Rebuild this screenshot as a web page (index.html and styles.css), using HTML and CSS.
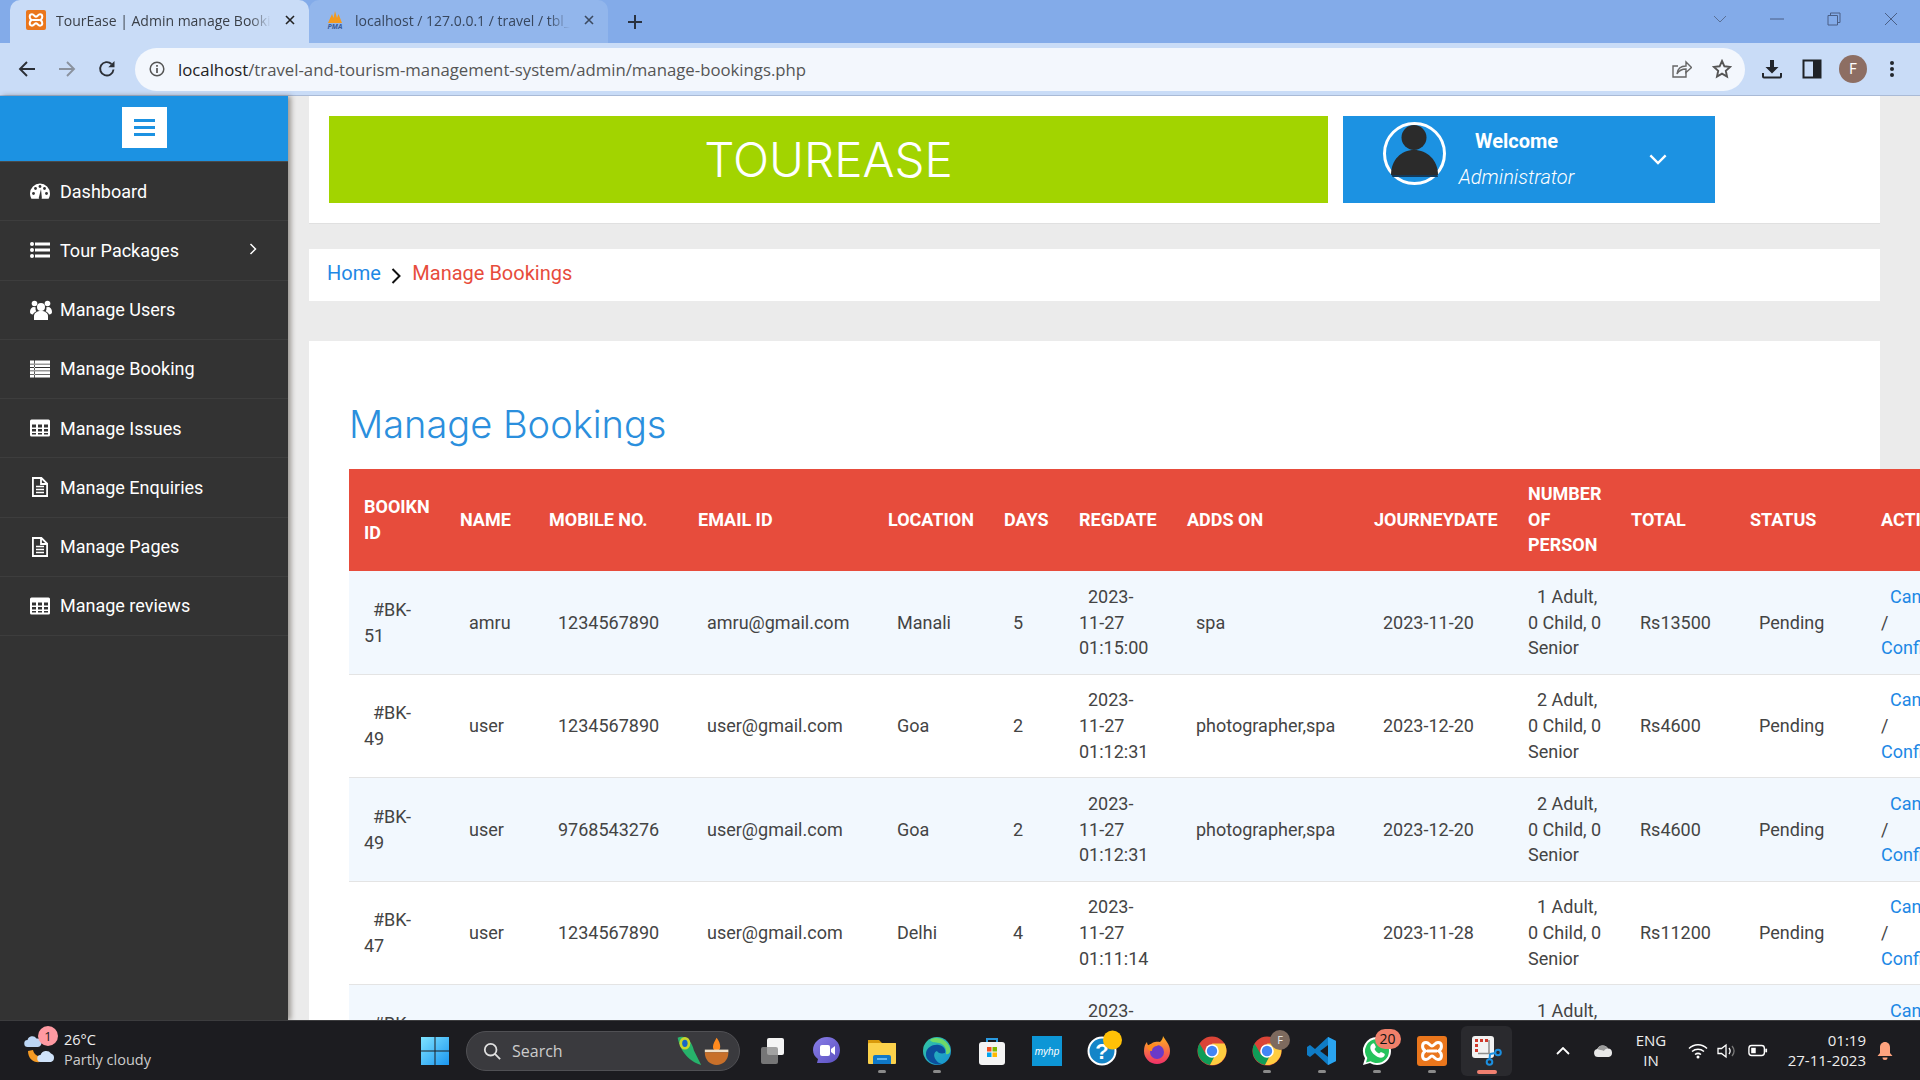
FILE: index.html
```html
<!DOCTYPE html>
<html lang="en">
<head>
  <meta charset="UTF-8">
  <meta name="viewport" content="width=device-width, initial-scale=1.0">
  <title>TourEase | Admin manage Bookings</title>
  <link rel="stylesheet" href="styles.css">
</head>
<body>
  <svg class="icon-defs">
    <symbol id="i-table" viewBox="0 0 20 17"><path fill="#fff" fill-rule="evenodd" d="M1.5 0h17A1.5 1.5 0 0 1 20 1.500v14a1.500 1.500 0 0 1-1.500 1.500h-17A1.500 1.500 0 0 1 0 15.500v-14A1.500 1.500 0 0 1 1.500 0zM2 5v3h4V5zm6 0v3h4V5zm6 0v3h4V5zM2 9.500v2.500h4V9.500zm6 0v2.500h4V9.500zm6 0v2.500h4V9.500zM2 13.500V15h4v-1.500zm6 0V15h4v-1.500zm6 0V15h4v-1.500z"/></symbol>
    <symbol id="i-file" viewBox="0 0 18 20"><path fill="none" stroke="#fff" stroke-width="1.800" d="M1.900 1h8.500l5.700 5.700V19H1.900zM10 1v6h6"/><path stroke="#fff" stroke-width="1.400" d="M5 9.500h8M5 12.500h8M5 15.500h8"/></symbol>
    <symbol id="i-xampp" viewBox="0 0 30 30"><rect width="30" height="30" rx="3" fill="#ea761c"/><path fill="none" stroke="#fff" stroke-width="3" d="M9 6.500c3 0 4 3.500 6 3.500s3-3.500 6-3.500c4.500 0 4.500 6.500.5 8.500 4 2 4 8.500-.5 8.500-3 0-4-3.500-6-3.500s-3 3.500-6 3.500c-4.500 0-4.500-6.500-.5-8.500-4-2-4-8.500.5-8.500zM10 15h10"/></symbol>
    <symbol id="i-chrome" viewBox="0 0 30 30"><circle cx="15" cy="15" r="14.500" fill="#db4437"/><path fill="#0f9d58" d="M2.500 7.500a14.500 14.500 0 0 0 10.500 21.400l6-10.400H9z"/><path fill="#ffcd40" d="M29.500 15c0-2.700-.8-5.300-2-7.500H15l4.500 9-6.500 12.400A14.500 14.500 0 0 0 29.500 15z"/><circle cx="15" cy="15" r="6.800" fill="#fff"/><circle cx="15" cy="15" r="5.200" fill="#4285f4"/></symbol>
  </svg>

  <!-- browser window top -->
  <div class="tabstrip">
    <div class="tab tab-active">
      <svg class="favicon"><use href="#i-xampp"/></svg>
      <span class="tab-title">TourEase | Admin manage Bookings</span>
      <svg class="tab-close" viewBox="0 0 10 10"><path stroke="#222" stroke-width="1.600" d="M1 1l8 8M9 1l-8 8"/></svg>
    </div>
    <div class="tab">
      <svg class="favicon" viewBox="0 0 20 20"><path fill="#f39a1e" d="M3 13L7 4l1.500 4L10 1l2 7 1.500-4 3.500 9z"/><text x="10" y="19" font-size="7" font-style="italic" font-weight="700" fill="#3a5c9a" text-anchor="middle">PMA</text></svg>
      <span class="tab-title">localhost / 127.0.0.1 / travel / tbl_booking</span>
      <svg class="tab-close" viewBox="0 0 10 10"><path stroke="#3c4a60" stroke-width="1.600" d="M1 1l8 8M9 1l-8 8"/></svg>
    </div>
    <svg class="new-tab" viewBox="0 0 16 16"><path stroke="#2a3240" stroke-width="2" d="M8 1v14M1 8h14"/></svg>
    <div class="window-btns">
      <svg class="win-btn" viewBox="0 0 14 14"><path fill="none" stroke="#5a7096" stroke-width="1" d="M1 4l6 6 6-6"/></svg>
      <svg class="win-btn" viewBox="0 0 14 14"><path stroke="#4a5f86" stroke-width="1" d="M0 7h14"/></svg>
      <svg class="win-btn" viewBox="0 0 14 14"><path fill="none" stroke="#4a5f86" stroke-width="1" d="M1 3.500h9.500V13H1zM3.500 3.500V1H13v9.500h-2.500"/></svg>
      <svg class="win-btn" viewBox="0 0 14 14"><path stroke="#4a5f86" stroke-width="1" d="M1 1l12 12M13 1L1 13"/></svg>
    </div>
  </div>

  <div class="toolbar">
    <svg class="nav-btn" viewBox="0 0 18 18"><path fill="none" stroke="#2b2f36" stroke-width="1.900" d="M17 9H2M9 2L2 9l7 7"/></svg>
    <svg class="nav-btn" viewBox="0 0 18 18"><path fill="none" stroke="#8a929e" stroke-width="1.900" d="M1 9h15M9 2l7 7-7 7"/></svg>
    <svg class="nav-btn" viewBox="0 0 18 18"><path fill="none" stroke="#2b2f36" stroke-width="1.900" d="M15.500 9.500A6.700 6.700 0 1 1 13.500 4"/><path fill="#2b2f36" d="M16.500 1v6.200h-6.200z"/></svg>
    <div class="address">
      <svg class="info-icon" viewBox="0 0 16 16"><circle cx="8" cy="8" r="6.800" fill="none" stroke="#555" stroke-width="1.500"/><path stroke="#555" stroke-width="1.700" d="M8 7v5M8 4v1.800"/></svg>
      <span class="url"><b>localhost</b>/travel-and-tourism-management-system/admin/manage-bookings.php</span>
      <svg class="addr-icon" viewBox="0 0 20 20"><path fill="none" stroke="#666" stroke-width="1.400" d="M14 12v6H1V7h5"/><path fill="none" stroke="#666" stroke-width="1.400" d="M5 15c.5-5 4-8 9-8V3l5.500 5.500L14 13.500V10c-4 0-7 1.500-9 5z"/></svg>
      <svg class="addr-icon" viewBox="0 0 20 20"><path fill="none" stroke="#555" stroke-width="1.900" d="M10 2l2.400 5.300 5.700.6-4.300 3.900 1.200 5.700-5-2.900-5 2.900 1.200-5.700L1.900 7.900l5.700-.6z"/></svg>
    </div>
    <svg class="tool-btn tool-first" viewBox="0 0 20 20"><path fill="#22262c" d="M8 1h4v7h4.500L10 14.500 3.500 8H8z"/><path fill="none" stroke="#22262c" stroke-width="2" d="M1 14v3.500a1 1 0 0 0 1 1h16a1 1 0 0 0 1-1V14"/></svg>
    <svg class="tool-btn" viewBox="0 0 20 20"><rect x="1.500" y="1.500" width="17" height="17" fill="#c9dcf7" stroke="#1f2226" stroke-width="2"/><rect x="11" y="2" width="7" height="16" fill="#1f2226"/></svg>
    <div class="profile">F</div>
    <svg class="tool-btn" viewBox="0 0 20 20"><circle cx="10" cy="4" r="2" fill="#22262c"/><circle cx="10" cy="10" r="2" fill="#22262c"/><circle cx="10" cy="16" r="2" fill="#22262c"/></svg>
  </div>

  <div class="app">
    <aside class="sidebar">
      <div class="side-top">
        <div class="burger"><span></span><span></span><span></span></div>
      </div>
      <ul class="side-menu">
        <li>
          <svg class="side-icon" viewBox="0 0 20 17"><path fill="#fff" d="M10 1a10 10 0 0 1 10 10c0 2-.5 3.800-1.400 5.200H1.400A10 10 0 0 1 0 11 10 10 0 0 1 10 1z"/><g fill="#333"><circle cx="3.500" cy="11" r="1.400"/><circle cx="5.500" cy="6" r="1.400"/><circle cx="10" cy="4" r="1.400"/><circle cx="14.500" cy="6" r="1.400"/><circle cx="16.500" cy="11" r="1.400"/><path d="M9 14.500l2-8 .8 8.200a1.500 1.500 0 1 1-2.800-.2z"/></g></svg>
          Dashboard
        </li>
        <li>
          <svg class="side-icon" viewBox="0 0 20 17"><g fill="#fff"><circle cx="2" cy="2.500" r="2"/><circle cx="2" cy="8.500" r="2"/><circle cx="2" cy="14.500" r="2"/><rect x="5" y="1" width="15" height="3"/><rect x="5" y="7" width="15" height="3"/><rect x="5" y="13" width="15" height="3"/></g></svg>
          Tour Packages
          <svg class="side-arrow" viewBox="0 0 8 12"><path fill="none" stroke="#fff" stroke-width="1.500" d="M1.500 1l5 5-5 5"/></svg>
        </li>
        <li>
          <svg class="side-icon side-icon-users" viewBox="0 0 22 20"><g fill="#fff"><circle cx="11" cy="7" r="4"/><path d="M4 20v-4c0-3 3-5 7-5s7 2 7 5v4z"/><circle cx="4.500" cy="3.500" r="2.800"/><circle cx="17.500" cy="3.500" r="2.800"/><path d="M0 12c0-3 1.500-5 4-5 .6 0 1.300.2 1.800.5-.6 1.500-.2 2.800.6 3.700C4.500 12 3.500 13 3 14.500 1 14.500 0 13.500 0 12zM22 12c0-3-1.500-5-4-5-.6 0-1.300.2-1.800.5.600 1.500.2 2.800-.6 3.700 1.900.8 2.900 1.800 3.400 3.300 2 0 3-1 3-2.500z"/></g></svg>
          Manage Users
        </li>
        <li>
          <svg class="side-icon" viewBox="0 0 20 17"><path fill="#fff" fill-rule="evenodd" d="M0 0h20v17H0zM0 3.200h20v.8H0zM0 6.600h20v.8H0zM0 10h20v.8H0zM0 13.400h20v.8H0zM4 0h.8v17H4z"/></svg>
          Manage Booking
        </li>
        <li><svg class="side-icon"><use href="#i-table"/></svg>Manage Issues</li>
        <li><svg class="side-icon"><use href="#i-file"/></svg>Manage Enquiries</li>
        <li><svg class="side-icon"><use href="#i-file"/></svg>Manage Pages</li>
        <li><svg class="side-icon"><use href="#i-table"/></svg>Manage reviews</li>
      </ul>
    </aside>

    <main class="content">
      <div class="panel header-panel">
        <div class="brand">TOUREASE</div>
        <div class="user-box">
          <svg class="user-pic" viewBox="0 0 63 63"><circle cx="31.500" cy="31.500" r="30" fill="#1c92e2" stroke="#fff" stroke-width="3"/><circle cx="31" cy="15.500" r="12.500" fill="#2b2b2b"/><path fill="#2b2b2b" d="M8 53c0-15 10-25 23-25s24 10 24 25z"/><path fill="#123a5c" d="M8.500 53h46l.5 2H9.500z"/></svg>
          <div class="user-text">
            <strong>Welcome</strong>
            <em>Administrator</em>
          </div>
          <svg class="user-arrow" viewBox="0 0 20 12"><path fill="none" stroke="#fff" stroke-width="2.600" d="M1.500 1.500L10 10l8.500-8.500"/></svg>
        </div>
      </div>

      <div class="panel crumbs">
        <a href="#">Home</a>
        <svg class="crumb-sep" viewBox="0 0 10 16"><path fill="none" stroke="#111" stroke-width="2" d="M1.500 1l7 7-7 7"/></svg>
        <span>Manage Bookings</span>
      </div>

      <div class="panel table-panel">
        <h2>Manage Bookings</h2>
        <table class="bookings">
          <colgroup>
            <col class="c-id"><col class="c-name"><col class="c-mobile"><col class="c-email"><col class="c-loc"><col class="c-days"><col class="c-reg"><col class="c-adds"><col class="c-journey"><col class="c-person"><col class="c-total"><col class="c-status"><col class="c-action">
          </colgroup>
          <thead>
            <tr>
              <th>BOOIKN ID</th><th>NAME</th><th>MOBILE NO.</th><th>EMAIL ID</th><th>LOCATION</th><th>DAYS</th><th>REGDATE</th><th>ADDS ON</th><th>JOURNEYDATE</th><th>NUMBER OF PERSON</th><th>TOTAL</th><th>STATUS</th><th>ACTION</th>
            </tr>
          </thead>
          <tbody>
            <tr>
              <td>#BK-51</td><td>amru</td><td>1234567890</td><td>amru@gmail.com</td><td>Manali</td><td>5</td><td>2023-11-27 01:15:00</td><td>spa</td><td>2023-11-20</td><td>1 Adult, 0 Child, 0 Senior</td><td>Rs13500</td><td>Pending</td><td><a href="#">Cancel</a> / <a href="#">Confirm</a></td>
            </tr>
            <tr>
              <td>#BK-49</td><td>user</td><td>1234567890</td><td>user@gmail.com</td><td>Goa</td><td>2</td><td>2023-11-27 01:12:31</td><td>photographer,spa</td><td>2023-12-20</td><td>2 Adult, 0 Child, 0 Senior</td><td>Rs4600</td><td>Pending</td><td><a href="#">Cancel</a> / <a href="#">Confirm</a></td>
            </tr>
            <tr>
              <td>#BK-49</td><td>user</td><td>9768543276</td><td>user@gmail.com</td><td>Goa</td><td>2</td><td>2023-11-27 01:12:31</td><td>photographer,spa</td><td>2023-12-20</td><td>2 Adult, 0 Child, 0 Senior</td><td>Rs4600</td><td>Pending</td><td><a href="#">Cancel</a> / <a href="#">Confirm</a></td>
            </tr>
            <tr>
              <td>#BK-47</td><td>user</td><td>1234567890</td><td>user@gmail.com</td><td>Delhi</td><td>4</td><td>2023-11-27 01:11:14</td><td></td><td>2023-11-28</td><td>1 Adult, 0 Child, 0 Senior</td><td>Rs11200</td><td>Pending</td><td><a href="#">Cancel</a> / <a href="#">Confirm</a></td>
            </tr>
            <tr>
              <td>#BK-46</td><td></td><td></td><td></td><td></td><td></td><td>2023-11-27 01:10:00</td><td></td><td></td><td>1 Adult, 0 Child, 0 Senior</td><td></td><td></td><td><a href="#">Cancel</a> / <a href="#">Confirm</a></td>
            </tr>
          </tbody>
        </table>
      </div>
    </main>
  </div>

  <!-- windows taskbar -->
  <footer class="taskbar">
    <div class="weather">
      <svg class="weather-icon" viewBox="0 0 36 36"><path fill="#f59a23" d="M6 18c0 8 6 12 12 11 4-.7 7-3 8-6-6 3-14 0-15-6z"/><path fill="#bcd6f5" d="M6 14a3.500 3.500 0 0 1-.5-7 5 5 0 0 1 9-1.500A4.300 4.300 0 0 1 16 14z"/><path fill="#cfe2f9" d="M19 29a3.500 3.500 0 0 1-.5-7 6 6 0 0 1 10.500-1.500A4.500 4.500 0 0 1 29 29z"/></svg>
      <span class="weather-badge">1</span>
      <div class="weather-text"><span>26°C</span><span class="weather-sub">Partly cloudy</span></div>
    </div>

    <div class="task-icons">
      <div class="tb-item">
        <svg viewBox="0 0 30 30"><defs><linearGradient id="g-start" x1="0" y1="0" x2="1" y2="1"><stop offset="0" stop-color="#7fe3ff"/><stop offset="1" stop-color="#1a96f0"/></linearGradient></defs><path fill="url(#g-start)" d="M1 1h13.500v13.500H1zM15.500 1H29v13.500H15.500zM1 15.500h13.500V29H1zM15.500 15.500H29V29H15.500z"/></svg>
      </div>
      <div class="search">
        <svg class="search-glass" viewBox="0 0 20 20"><circle cx="8.500" cy="8.500" r="6.500" fill="none" stroke="#e0e0e0" stroke-width="2"/><path stroke="#e0e0e0" stroke-width="2" d="M13 13l6 6"/></svg>
        <span class="search-label">Search</span>
        <svg class="search-art" viewBox="0 0 64 36"><path fill="#27b26b" d="M4 4c8-4 16 4 18 14l8 16c-8-2-22-10-26-30z"/><ellipse cx="12" cy="10" rx="6" ry="7" fill="#c8d62c"/><ellipse cx="12" cy="10" rx="3" ry="4" fill="#1866c8"/><path fill="#ff8a1e" d="M47 4c3 4 4 7 4 10 0 3-2 4-4 4s-4-1-4-4c0-3 2-6 4-10z"/><path fill="#f0e0c8" d="M34 17h26v3H34z"/><path fill="#c8702a" d="M34 20h26c0 9-6 14-13 14s-13-5-13-14z"/></svg>
      </div>
      <div class="tb-item">
        <svg viewBox="0 0 30 30"><rect x="10" y="2" width="17" height="17" rx="2" fill="#f4f4f4"/><rect x="4" y="11" width="17" height="17" rx="2" fill="#8d8d8d" opacity=".8"/></svg>
      </div>
      <div class="tb-item">
        <svg viewBox="0 0 30 30"><defs><linearGradient id="g-chat" x1="0" y1="0" x2="1" y2="1"><stop offset="0" stop-color="#8a7fe8"/><stop offset="1" stop-color="#5a4fc0"/></linearGradient></defs><path fill="url(#g-chat)" d="M15 1c8 0 13 6 13 13s-5 13-13 13H5l1-4c-3-2-5-5-5-9C1 7 7 1 15 1z"/><rect x="8" y="9" width="10" height="11" rx="2" fill="#fff"/><path fill="#fff" d="M19 13l4-3v9l-4-3z"/></svg>
      </div>
      <div class="tb-item has-dot">
        <svg viewBox="0 0 30 30"><path fill="#d99a0c" d="M1 4h11l3 3h14v8H1z"/><rect x="1" y="7" width="28" height="21" rx="1" fill="#fbd14b"/><path fill="#0f78c8" d="M8 19h14a2 2 0 0 1 2 2v7H6v-7a2 2 0 0 1 2-2z"/><rect x="10" y="22" width="10" height="2" fill="#63b7f0"/></svg>
      </div>
      <div class="tb-item has-dot">
        <svg viewBox="0 0 30 30"><defs><linearGradient id="g-edge" x1="0" y1="0" x2="1" y2="1"><stop offset="0" stop-color="#34c7a0"/><stop offset="1" stop-color="#1590d8"/></linearGradient></defs><circle cx="15" cy="15" r="14" fill="url(#g-edge)"/><path fill="#0c4e9c" d="M4 17c1-6 7-9 13-8 5 1 7 5 6 8-4 1-7 0-8-2-3 1-4 5-1 9 1 2 3 3 6 4-8 2-17-3-16-11z"/><path fill="#7be05c" d="M8 4c6-4 16-2 20 8 1 4-1 7-4 6 1-5-2-10-7-11-4-1-7 0-9-3z" opacity=".85"/></svg>
      </div>
      <div class="tb-item">
        <svg viewBox="0 0 30 30"><path fill="none" stroke="#2a9ae0" stroke-width="2" d="M10 7V3h10v4"/><rect x="2" y="6" width="26" height="23" rx="3" fill="#f4f4f4"/><rect x="10" y="11" width="4.500" height="4.500" fill="#f25022"/><rect x="15.500" y="11" width="4.500" height="4.500" fill="#7fba00"/><rect x="10" y="16.500" width="4.500" height="4.500" fill="#00a4ef"/><rect x="15.500" y="16.500" width="4.500" height="4.500" fill="#ffb900"/></svg>
      </div>
      <div class="tb-item">
        <svg viewBox="0 0 30 30"><rect width="30" height="30" fill="#0d96d6"/><text x="15" y="19" font-family="Liberation Sans, sans-serif" font-size="10" font-style="italic" fill="#fff" text-anchor="middle">myhp</text></svg>
      </div>
      <div class="tb-item">
        <svg viewBox="0 0 30 30"><circle cx="15" cy="15" r="13.500" fill="#1485c8" stroke="#fff" stroke-width="2"/><text x="15" y="23" font-family="Liberation Sans, sans-serif" font-size="22" font-weight="700" fill="#fff" text-anchor="middle">?</text><circle cx="25.500" cy="4" r="9.500" fill="#ffc107"/></svg>
      </div>
      <div class="tb-item">
        <svg viewBox="0 0 30 30"><defs><linearGradient id="g-fox" x1="0" y1="0" x2="0" y2="1"><stop offset="0" stop-color="#ffb21e"/><stop offset="1" stop-color="#f0306a"/></linearGradient></defs><path fill="url(#g-fox)" d="M21 0c2 4 7 8 7 15a13 13 0 0 1-26 0c0-4 1-7 3-9 0 2 1 3 2 4 2-4 8-5 11-4 2-2 3-4 3-6z"/><circle cx="15" cy="16" r="7" fill="#6b3ac8"/><path fill="#ff8a1e" d="M5 10c4-3 9-3 11 0-4 0-6 2-6 5-3 0-5-2-5-5z"/></svg>
      </div>
      <div class="tb-item">
        <svg><use href="#i-chrome"/></svg>
      </div>
      <div class="tb-item has-dot">
        <svg><use href="#i-chrome"/></svg>
        <span class="tb-badge badge-profile">F</span>
      </div>
      <div class="tb-item has-dot">
        <svg viewBox="0 0 30 30"><path fill="#0f7cc6" d="M21 1l8 4v20l-8 4L8 17l-5 4-3-2v-8l3-2 5 4z"/><path fill="#2aa4f0" d="M21 1l8 4v20l-8 4zM21 9l-8 6 8 6z"/><path fill="#1a1a1e" d="M21 9v12l-8-6z"/></svg>
      </div>
      <div class="tb-item has-dot">
        <svg viewBox="0 0 30 30"><path fill="#fff" d="M15 1a14 14 0 0 1 0 28c-2.500 0-5-.7-7-1.900L1 29l2-6.800A14 14 0 0 1 15 1z"/><path fill="#25c35c" d="M15 3a12 12 0 0 1 0 24c-2.300 0-4.500-.7-6.300-1.800L4 26.500l1.300-4.600A12 12 0 0 1 15 3z"/><path fill="#fff" d="M10 8c1-1 2-1 2.500 0l1.200 2.600c.2.500 0 1-.3 1.400l-.9 1c1 2 2.600 3.500 4.600 4.500l1.100-1c.4-.3.900-.4 1.400-.2l2.500 1.200c.9.500.9 1.600.2 2.600-1.500 2-4 2-7 .6-4-2-7-6-7-9.200 0-1.500.7-2.600 1.700-3.500z"/></svg>
        <span class="tb-badge badge-count">20</span>
      </div>
      <div class="tb-item has-dot">
        <svg><use href="#i-xampp"/></svg>
      </div>
      <div class="tb-item tb-active">
        <svg viewBox="0 0 30 30"><rect width="22" height="22" rx="3" fill="#f2f2f2"/><path fill="#d0392b" d="M3 3h3v3H3zM8 3h3v3H8zM13 3h3v3h-3zM3 8h3v3H3zM3 13h3v3H3z"/><path fill="none" stroke="#8e8e8e" stroke-width="1.500" d="M6 17.500h12M17 4v14"/><g fill="none" stroke="#1b8fe0" stroke-width="2"><circle cx="26" cy="16.500" r="2.800"/><circle cx="17.500" cy="26" r="2.800"/><path d="M18 18l5.500-1M18 18l-.5 5.500"/></g></svg>
      </div>
    </div>

    <div class="tray">
      <svg class="tray-chevron" viewBox="0 0 14 8"><path fill="none" stroke="#fff" stroke-width="1.800" d="M1 7l6-6 6 6"/></svg>
      <svg class="tray-cloud" viewBox="0 0 20 13"><path fill="#e8e8e8" d="M5 13a4 4 0 0 1-.8-7.900A6 6 0 0 1 15 4.500a4.300 4.300 0 0 1 .6 8.500z"/><path fill="#9c9c9c" d="M4.200 5.100A6 6 0 0 1 15 4.500c-2 0-3.500 1-4 2.500-2.500-1-5-.8-6.800-1.900z"/></svg>
      <div class="tray-lang"><span>ENG</span><span>IN</span></div>
      <svg class="tray-wifi" viewBox="0 0 20 16"><g fill="none" stroke="#fff" stroke-width="1.500"><path d="M1 5.500c5-5 13-5 18 0"/><path d="M4 8.500c3.500-3 8.500-3 12 0"/><path d="M7 11.500c2-1.500 4-1.500 6 0"/></g><circle cx="10" cy="14" r="1.500" fill="#fff"/></svg>
      <svg class="tray-speaker" viewBox="0 0 20 16"><path fill="none" stroke="#fff" stroke-width="1.300" d="M1 5.500h3.500L9 2v12l-4.500-3.500H1z"/><path fill="none" stroke="#fff" stroke-width="1.300" d="M12 5c1.500 2 1.500 4 0 6"/><path fill="none" stroke="#777" stroke-width="1.300" d="M15 3c2.500 3 2.500 7 0 10"/></svg>
      <svg class="tray-battery" viewBox="0 0 22 14"><rect x="1" y="1.500" width="17" height="11" rx="3" fill="none" stroke="#fff" stroke-width="1.500"/><rect x="3.500" y="4" width="5" height="6" fill="#fff"/><rect x="19" y="5" width="2" height="4" fill="#fff"/></svg>
      <div class="tray-clock"><span>01:19</span><span>27-11-2023</span></div>
      <svg class="tray-bell" viewBox="0 0 16 20"><path fill="#ffa37e" d="M8 1c3 0 5 2.300 5 5.500V12l2.500 3H.5L3 12V6.500C3 3.300 5 1 8 1z"/><path fill="#ffa37e" d="M5.500 16.500h5a2.500 2.500 0 0 1-5 0z"/></svg>
    </div>
  </footer>
</body>
</html>
```

FILE: styles.css
```css
* {
  box-sizing: border-box;
}
html, body {
  height: 100%;
}
body {
  margin: 0;
  overflow: hidden;
  display: flex;
  flex-direction: column;
  font-family: Roboto, "Liberation Sans", sans-serif;
  font-size: 18px;
  color: #444;
  background: #ebebeb;
}
a {
  color: #1e88e5;
  text-decoration: none;
}
.icon-defs {
  display: none;
}

/* browser chrome */
.tabstrip {
  height: 43px;
  flex: none;
  display: flex;
  align-items: flex-end;
  padding-left: 10px;
  background: #83abe9;
  font-family: "Open Sans", "Noto Sans", sans-serif;
  font-size: 14px;
}
.tab {
  width: 299px;
  height: 43px;
  display: flex;
  align-items: center;
  padding: 0 14px 3px 16px;
  background: #92b6ec;
  color: #38475e;
  border-radius: 10px 10px 0 0;
}
.tab-active {
  background: #c9dcf7;
  color: #3a3f47;
}
.favicon {
  width: 20px;
  height: 20px;
  flex: none;
  margin-right: 10px;
}
.tab-title {
  flex: 1;
  white-space: nowrap;
  overflow: hidden;
  mask-image: linear-gradient(to right, #000 90%, transparent);
}
.tab-close {
  width: 10px;
  height: 10px;
  flex: none;
  margin-left: 14px;
}
.new-tab {
  width: 16px;
  height: 16px;
  margin: 0 0 13px 19px;
}
.window-btns {
  margin-left: auto;
  height: 38px;
  display: flex;
  align-items: center;
  gap: 43px;
  padding-right: 22px;
  align-self: flex-start;
}
.win-btn {
  width: 14px;
  height: 14px;
}
.toolbar {
  height: 53px;
  flex: none;
  display: flex;
  align-items: center;
  padding-left: 18px;
  background: #c9dcf7;
  border-bottom: 1px solid #a9bad6;
}
.nav-btn {
  width: 18px;
  height: 18px;
  margin-right: 22px;
}
.address {
  width: 1610px;
  height: 43px;
  margin-left: -3px;
  display: flex;
  align-items: center;
  padding: 0 13px 0 14px;
  background: #f3f7fd;
  border-radius: 22px;
}
.info-icon {
  width: 16px;
  height: 16px;
  margin-right: 13px;
}
.url {
  flex: 1;
  font-family: "Open Sans", "Noto Sans", sans-serif;
  font-size: 16.760px;
  color: #555;
  white-space: nowrap;
}
.url b {
  font-weight: 400;
  color: #222;
}
.addr-icon {
  width: 20px;
  height: 20px;
  margin-left: 20px;
}
.tool-btn {
  width: 20px;
  height: 20px;
  margin-left: 20px;
}
.tool-first {
  margin-left: 17px;
}
.profile {
  width: 28px;
  height: 28px;
  margin-left: 17px;
  margin-right: -5px;
  border-radius: 50%;
  background: #8d6e63;
  color: #fff;
  font-size: 14px;
  line-height: 28px;
  text-align: center;
}

/* page */
.app {
  flex: 1;
  min-height: 0;
  display: flex;
}
.sidebar {
  width: 288px;
  flex: none;
  background: #333;
  color: #fff;
  box-shadow: 3px 0 5px rgba(60, 50, 40, 0.45);
  position: relative;
}
.side-top {
  height: 66px;
  display: flex;
  justify-content: center;
  padding-top: 11px;
  background: #1c92e2;
  border-bottom: 1px solid #4a4a4a;
}
.burger {
  width: 45px;
  height: 41px;
  display: flex;
  flex-direction: column;
  justify-content: center;
  align-items: center;
  gap: 4px;
  background: #fff;
}
.burger span {
  width: 21px;
  height: 3px;
  background: #1c92e2;
}
.side-menu {
  list-style: none;
  margin: 0;
  padding: 0;
}
.side-menu li {
  height: 59.250px;
  display: flex;
  align-items: center;
  padding-left: 30px;
  border-bottom: 1px solid #3d3d3d;
}
.side-icon {
  width: 20px;
  height: 20px;
  flex: none;
  margin-right: 10px;
}
.side-icon-users {
  width: 22px;
  margin-right: 8px;
}
.side-arrow {
  width: 8px;
  height: 12px;
  margin-left: auto;
  margin-right: 31px;
  margin-bottom: 3px;
}
.content {
  flex: 1;
  min-width: 0;
  overflow: hidden;
  padding: 0 40px 0 21px;
}
.panel {
  background: #fff;
}
.header-panel {
  height: 128px;
  display: flex;
  gap: 15px;
  padding: 20px 20px;
  border-bottom: 1px solid #e0e0e0;
  align-items: flex-start;
}
.brand {
  width: 999px;
  height: 87px;
  background: #a2d400;
  color: #fff;
  font-family: Inter, "Open Sans", sans-serif;
  font-weight: 300;
  font-size: 47.500px;
  line-height: 87px;
  text-align: center;
}
.user-box {
  width: 372px;
  height: 87px;
  display: flex;
  align-items: center;
  padding-left: 40px;
  background: #1c92e2;
  color: #fff;
}
.user-pic {
  width: 63px;
  height: 63px;
  flex: none;
  margin-bottom: 12px;
}
.user-text {
  width: 125px;
  margin-left: 8px;
  display: flex;
  flex-direction: column;
  align-items: center;
  gap: 14px;
  padding-top: 1px;
  text-align: center;
}
.user-text strong {
  font-size: 20px;
  font-weight: 700;
  line-height: 21px;
}
.user-text em {
  font-size: 20px;
  font-weight: 300;
  line-height: 23px;
  white-space: nowrap;
}
.user-arrow {
  width: 18px;
  height: 11px;
  margin-left: 70px;
}
.crumbs {
  height: 52px;
  margin-top: 25px;
  display: flex;
  align-items: center;
  padding: 0 0 4px 18px;
  font-size: 20px;
}
.crumbs span {
  color: #e74c3c;
}
.crumb-sep {
  width: 10px;
  height: 16px;
  margin: 6px 11px 0 10.500px;
}
.table-panel {
  margin-top: 40px;
  padding: 60px 0 0 40px;
}
.table-panel h2 {
  margin: 0 0 22px;
  font-family: Inter, "Open Sans", sans-serif;
  font-weight: 300;
  font-size: 38px;
  line-height: 46px;
  color: #2b8fdd;
}

/* bookings table */
.bookings {
  table-layout: fixed;
  width: 1613px;
  border-collapse: collapse;
  background: #fff;
}
.c-id { width: 96px; }
.c-name { width: 89px; }
.c-mobile { width: 149px; }
.c-email { width: 190px; }
.c-loc { width: 116px; }
.c-days { width: 75px; }
.c-reg { width: 108px; }
.c-adds { width: 187px; }
.c-journey { width: 154px; }
.c-person { width: 103px; }
.c-total { width: 119px; }
.c-status { width: 131px; }
.c-action { width: 96px; }
.bookings th,
.bookings td {
  padding: 12.700px 15px;
  line-height: 25.710px;
  text-align: left;
  vertical-align: middle;
  font-size: 18px;
}
.bookings th {
  padding-top: 12px;
  padding-bottom: 13.200px;
  background: #e74c3c;
  color: #fff;
  font-weight: 700;
}
.bookings td {
  font-weight: 400;
  text-indent: 9px;
  border-bottom: 1px solid #e4e4e4;
}
.bookings td:nth-child(10) {
  padding-right: 8px;
}
.bookings tbody tr:nth-child(odd) {
  background: #f2f8fe;
}

/* windows taskbar */
.taskbar {
  height: 60px;
  flex: none;
  display: flex;
  align-items: center;
  background: #1c1c20;
  border-top: 1px solid #3c3c3e;
  color: #eee;
  font-family: "Open Sans", "Noto Sans", sans-serif;
  font-size: 14.500px;
  position: relative;
}
.weather {
  width: 407px;
  flex: none;
  display: flex;
  align-items: center;
  padding-left: 22px;
  position: relative;
}
.weather-icon {
  width: 36px;
  height: 36px;
}
.weather-badge {
  position: absolute;
  left: 38px;
  top: -4px;
  width: 20px;
  height: 20px;
  border-radius: 50%;
  background: #ff9aa2;
  color: #222;
  font-size: 13px;
  line-height: 20px;
  text-align: center;
}
.weather-text {
  margin-left: 6px;
  margin-bottom: 2px;
  display: flex;
  flex-direction: column;
  line-height: 20px;
}
.weather-sub {
  color: #ccc;
}
.task-icons {
  display: flex;
  align-items: center;
  height: 100%;
}
.tb-item {
  width: 55px;
  height: 100%;
  flex: none;
  display: flex;
  align-items: center;
  justify-content: center;
  position: relative;
}
.tb-item svg {
  width: 30px;
  height: 30px;
  overflow: visible;
}
.has-dot::after {
  content: "";
  position: absolute;
  left: 23.500px;
  bottom: 7px;
  width: 8px;
  height: 3px;
  border-radius: 2px;
  background: #8a8a8a;
}
.tb-active {
  background: #2a2a2e;
  border-radius: 6px;
  height: 50px;
  width: 51px;
  margin: 0 2px;
}
.tb-active::after {
  content: "";
  position: absolute;
  left: 15.500px;
  bottom: 2px;
  width: 20px;
  height: 4px;
  border-radius: 2px;
  background: #f08070;
}
.tb-badge {
  position: absolute;
  border-radius: 50%;
  text-align: center;
}
.badge-profile {
  left: 31px;
  top: 9px;
  width: 20px;
  height: 20px;
  background: #7d6a5e;
  color: #eee;
  font-size: 11px;
  line-height: 20px;
}
.badge-count {
  left: 25.500px;
  top: 8px;
  width: 26px;
  height: 20px;
  border-radius: 10px;
  background: #f0806a;
  color: #111;
  font-size: 14px;
  line-height: 20px;
}
.search {
  width: 274px;
  height: 40px;
  flex: none;
  margin: 0 4px 0 4px;
  display: flex;
  align-items: center;
  padding: 0 7px 0 16px;
  background: #3a3a3e;
  border: 1px solid #505054;
  border-radius: 20px;
}
.search-glass {
  width: 18px;
  height: 18px;
}
.search-label {
  margin-left: 11px;
  font-size: 16px;
  color: #ccc;
}
.search-art {
  width: 58px;
  height: 33px;
  margin-left: auto;
}
.tray {
  flex: 1;
  display: flex;
  align-items: center;
  justify-content: flex-end;
  padding-right: 26px;
}
.tray-chevron {
  width: 14px;
  height: 8px;
}
.tray-cloud {
  width: 20px;
  height: 13px;
  margin-left: 23px;
}
.tray-lang {
  width: 40px;
  margin-left: 18px;
  margin-bottom: 2px;
  display: flex;
  flex-direction: column;
  align-items: center;
  font-size: 15px;
  line-height: 20px;
}
.tray-wifi {
  width: 20px;
  height: 16px;
  margin-left: 17px;
}
.tray-speaker {
  width: 20px;
  height: 16px;
  margin-left: 9px;
}
.tray-battery {
  width: 20px;
  height: 13px;
  margin-left: 11px;
}
.tray-clock {
  width: 78px;
  margin-left: 20px;
  margin-bottom: 2px;
  display: flex;
  flex-direction: column;
  align-items: flex-end;
  font-size: 15px;
  line-height: 20px;
  white-space: nowrap;
}
.tray-bell {
  width: 16px;
  height: 20px;
  margin-left: 11px;
  margin-right: 1px;
}
```
